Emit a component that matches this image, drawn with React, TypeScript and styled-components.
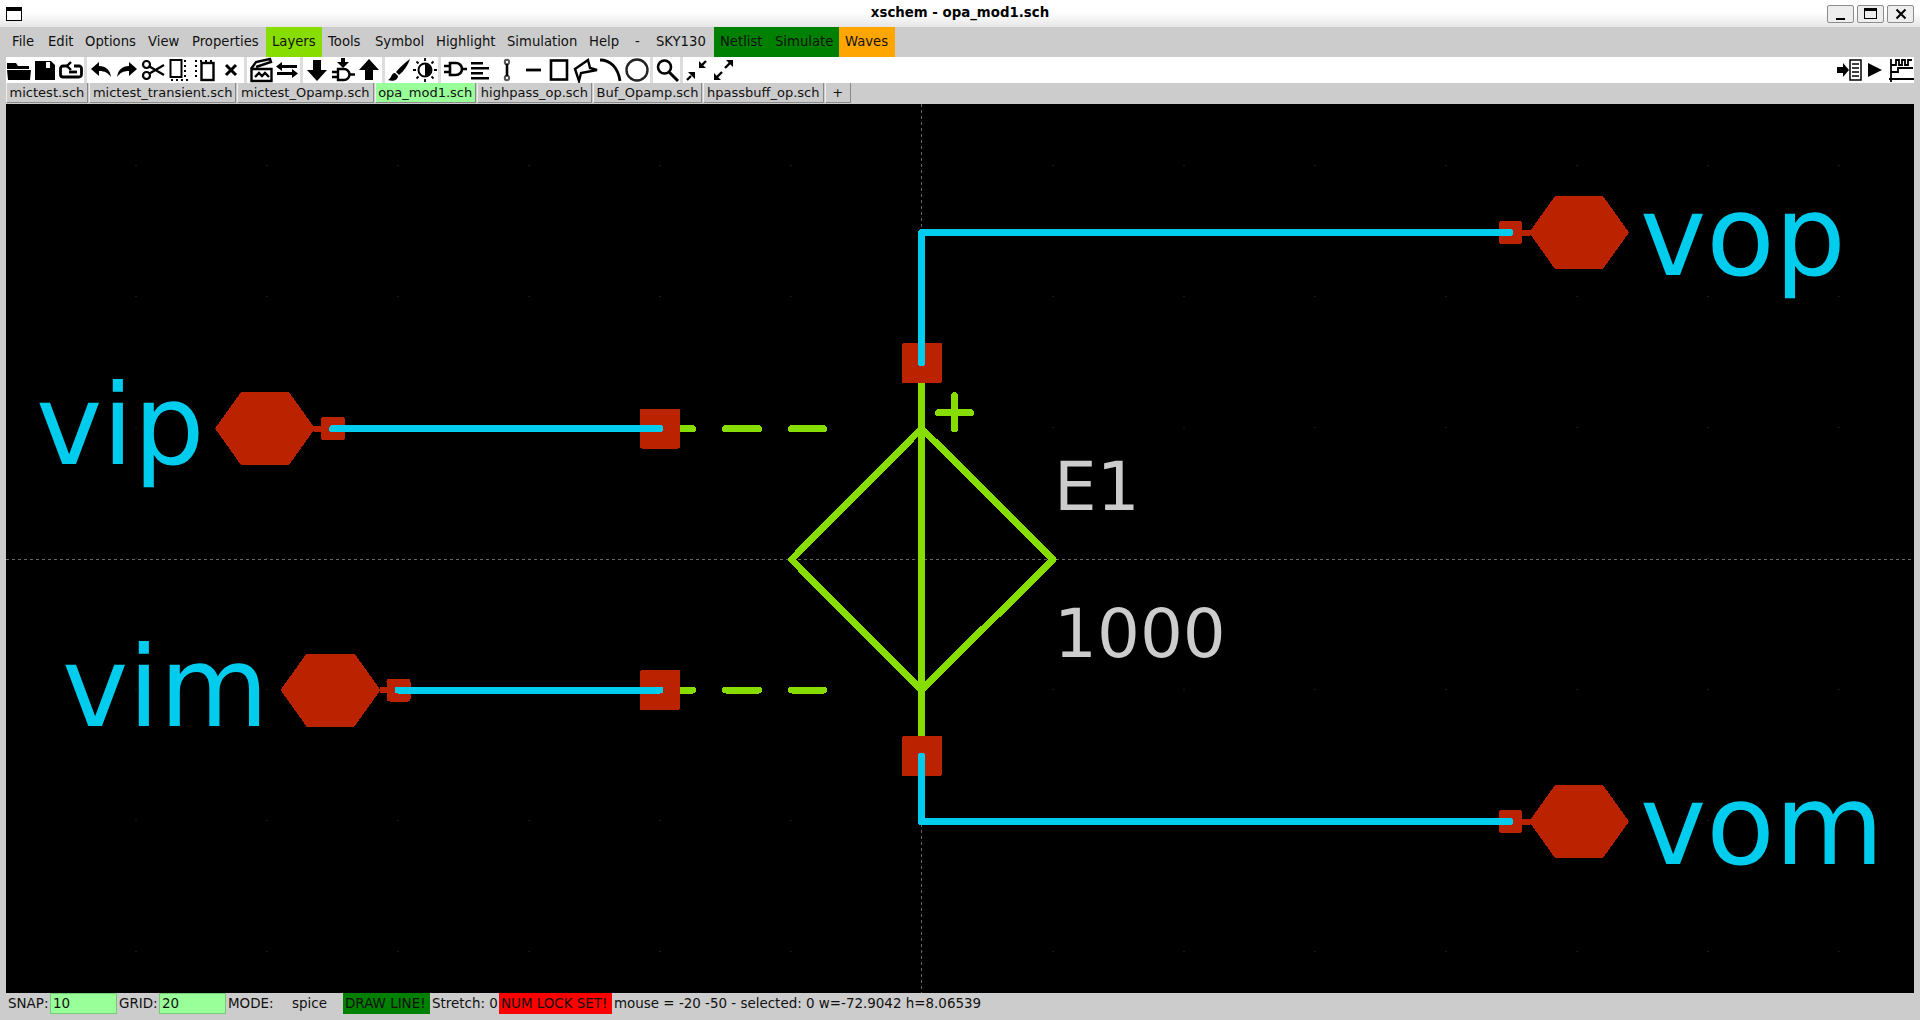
import React from 'react'
import styled, { createGlobalStyle } from 'styled-components'

const GlobalStyle = createGlobalStyle`
  html, body {
    margin: 0;
    padding: 0;
    background: #cccccc;
  }
  #root {
    width: 1920px;
    height: 1020px;
  }
`

const COLORS = {
  wire: '#00ccee',
  pin: '#bb2200',
  symbol: '#88dd00',
  text: '#cccccc',
  entry: '#99ff99'
}

const Window = styled.div`
  display: flex;
  flex-direction: column;
  width: 1920px;
  height: 1020px;
  overflow: hidden;
  background: #cccccc;
  color: #111111;
  font-family: 'DejaVu Sans', sans-serif;
  font-size: 13px;
`

const TitleBar = styled.header`
  position: relative;
  display: flex;
  align-items: center;
  justify-content: space-between;
  height: 27px;
  padding: 0 6px;
  box-sizing: border-box;
  background: linear-gradient(#ffffff 0, #ffffff 45%, #e6e6e6 100%);
`

const Title = styled.div`
  position: absolute;
  left: 0;
  right: 0;
  top: 5px;
  text-align: center;
  font-size: 13.33px;
  line-height: 16px;
  font-weight: 700;
  color: #000000;
`

const WindowIcon = styled.div`
  width: 16px;
  height: 14px;
  box-sizing: border-box;
  border: 1.5px solid #000000;
  border-top-width: 4px;
  background: #ffffff;
`

const WindowButtons = styled.div`
  display: flex;
  gap: 3px;
`

const WindowButton = styled.div`
  display: flex;
  align-items: center;
  justify-content: center;
  width: 27px;
  height: 18px;
  box-sizing: border-box;
  border: 1px solid #8c8c8c;
  border-radius: 2px;
  background: #eeeeee;
`

const MenuBar = styled.nav`
  display: flex;
  align-items: stretch;
  height: 30px;
  padding: 0 6px;
`

const MenuItem = styled.div<{ $width: number; $bg?: string }>`
  display: flex;
  align-items: center;
  box-sizing: border-box;
  width: ${({ $width }) => $width}px;
  padding: 0 0 2px 6px;
  font-size: 13.2px;
  white-space: pre;
  background: ${({ $bg }) => $bg || 'transparent'};
`

const Toolbar = styled.div`
  display: flex;
  height: 26px;
  margin: 0 6px;
  background: #ffffff;
`

const ToolGroup = styled.div<{ $right?: boolean }>`
  display: flex;
  margin-left: ${({ $right }) => ($right ? 'auto' : '0')};
`

const ToolSep = styled.div`
  width: 3px;
  margin-right: 1px;
  background: #dddddd;
`

const ToolButton = styled.div`
  width: 26px;
  height: 26px;
  display: flex;
  align-items: center;
  justify-content: center;
`

const TabBar = styled.div`
  display: flex;
  height: 21px;
  padding: 0 6px;
`

const Tab = styled.div<{ $active?: boolean }>`
  display: flex;
  align-items: center;
  height: 20px;
  padding: 0 3px 0 2.6px;
  margin-right: 1px;
  box-sizing: border-box;
  white-space: pre;
  background: ${({ $active }) => ($active ? COLORS.entry : '#cccccc')};
  border-right: 1px solid #888888;
  border-bottom: 1px solid #888888;
  border-left: 1px solid #eeeeee;
`

const Canvas = styled.main`
  flex: 1;
  margin: 0 6px;
  background: #000000;
`

const Sheet = styled.svg`
  display: block;
  width: 1908px;
  height: 889px;
`

const Wire = styled.path<{ $color: string }>`
  fill: none;
  stroke: ${({ $color }) => $color};
  stroke-width: 7px;
  stroke-linecap: round;
  stroke-linejoin: round;
`

const Guide = styled.path`
  fill: none;
  stroke: #666666;
  stroke-width: 1px;
  stroke-dasharray: 3 3;
  shape-rendering: crispEdges;
`

const PinBox = styled.rect`
  fill: ${COLORS.pin};
`

const PinShape = styled.polygon`
  fill: ${COLORS.pin};
`

const NetLabel = styled.text`
  fill: ${COLORS.wire};
  font-family: 'DejaVu Sans', sans-serif;
  font-size: 112px;
`

const SymbolLabel = styled.text`
  fill: ${COLORS.text};
  font-family: 'DejaVu Sans', sans-serif;
  font-size: 67.5px;
`

const StatusBar = styled.footer`
  display: flex;
  align-items: flex-start;
  height: 27px;
  padding: 0 6px;
  font-size: 13.45px;
`

const StatusCell = styled.div<{ $width: number; $bg?: string }>`
  display: flex;
  align-items: center;
  height: 21px;
  width: ${({ $width }) => $width}px;
  box-sizing: border-box;
  padding-left: 2px;
  white-space: pre;
  background: ${({ $bg }) => $bg || 'transparent'};
`

const StatusEntry = styled(StatusCell)`
  background: ${COLORS.entry};
  border: 1px solid #77cc77;
`

const menus: [string, number, string?][] = [
  ['File', 36],
  ['Edit', 37],
  ['Options', 63],
  ['View', 44],
  ['Properties', 80],
  ['Layers', 56, '#88dd00'],
  ['Tools', 47],
  ['Symbol', 61],
  ['Highlight', 71],
  ['Simulation', 82],
  ['Help', 46],
  ['-', 21],
  ['SKY130', 64],
  ['Netlist', 55, '#008000'],
  ['Simulate', 70, '#008000'],
  ['Waves', 56, '#ffa500']
]

const tabs = [
  'mictest.sch',
  'mictest_transient.sch',
  'mictest_Opamp.sch',
  'opa_mod1.sch',
  'highpass_op.sch',
  'Buf_Opamp.sch',
  'hpassbuff_op.sch',
  ' + '
]

const Icon: React.FC<{ children: React.ReactNode }> = ({ children }) => (
  <svg width="26" height="26" viewBox="0 0 26 26">
    {children}
  </svg>
)

const toolIcons: Record<string, React.ReactNode> = {
  open: <path d="M1 6h9l2 3h11v3H1zM1 13h24l-1 10H2z" />,
  save: (
    <path
      fillRule="evenodd"
      d="M3 4h16l4 4v15H3zM14 5v6h4V5z"
    />
  ),
  reload: (
    <g fill="none" stroke="#000" strokeWidth="2.8">
      <path d="M10 9H5a2.500 2.500 0 0 0-2.500 2.500v6A2.500 2.500 0 0 0 5 20h16a2.500 2.500 0 0 0 2.500-2.500v-6A2.500 2.500 0 0 0 21 9h-5" />
      <path d="M19 15h-8" />
      <path d="M13 5l-4 4 4 4" strokeWidth="2.400" />
    </g>
  ),
  undo: <path d="M3 12l8-7v4c7 0 11 4 12 11-3-4-6-6-12-6v5z" />,
  redo: <path d="M23 12l-8-7v4c-7 0-11 4-12 11 3-4 6-6 12-6v5z" />,
  cut: (
    <g fill="none" stroke="#000" strokeWidth="2.2">
      <circle cx="6.500" cy="7.500" r="3.500" />
      <circle cx="6.500" cy="18.500" r="3.500" />
      <path d="M9.500 9.500L24 18M9.500 16.500L24 8" />
    </g>
  ),
  copy: (
    <g>
      <rect x="4.500" y="3" width="11" height="17" fill="none" stroke="#000" strokeWidth="2" />
      <path d="M18 3h2v2h-2zM18 8h2v2h-2zM18 13h2v2h-2zM18 18h2v2h-2zM5 22h2v2H5zM10 22h2v2h-2zM15 22h2v2h-2zM20 22h2v2h-2z" />
    </g>
  ),
  move: (
    <g>
      <rect x="9.500" y="6" width="12" height="17" fill="none" stroke="#000" strokeWidth="2.400" />
      <path d="M3 3h2v2H3zM8 3h2v2H8zM13 3h2v2h-2zM18 3h2v2h-2zM3 8h2v2H3zM3 13h2v2H3zM3 18h2v2H3z" />
    </g>
  ),
  del: <path d="M8 8l10 10M18 8L8 18" stroke="#000" strokeWidth="3" />,
  schematic: (
    <g fill="none" stroke="#000" strokeWidth="2.400">
      <path d="M3 12L8 5l14-3 1 3-15 5" />
      <path d="M3.500 12h20v12h-20zM7 20l4-4 3 3 3-3 4 4" />
    </g>
  ),
  swap: <path d="M8 5v3h15v3H8v3L2 9.500zM18 12v3H3v3h15v3l6-4.500z" />,
  down: <path d="M9 3h8v10h6L13 24 3 13h6z" />,
  descend: (
    <g>
      <path d="M11 1h4v4h4l-6 6-6-6h4z" />
      <path
        fill="none"
        stroke="#000"
        strokeWidth="2.400"
        d="M8 12h6a5.500 5.500 0 0 1 0 11H8zM2 15h6M2 20h6M20 17.500h5"
      />
    </g>
  ),
  up: <path d="M13 2l10 11h-6v10H9V13H3z" />,
  brush: <path d="M24 2c-4 3-10 8-14 13l3 3c5-4 9-10 11-16zM9 16c-4 0-3 5-7 7 5 2 10 0 10-4z" />,
  sun: (
    <g>
      <circle cx="13" cy="13" r="6.500" fill="none" stroke="#000" strokeWidth="2" />
      <path d="M13 7a6 6 0 0 1 0 12z" />
      <path
        stroke="#000"
        strokeWidth="1.800"
        strokeDasharray="3 2"
        d="M13 1v3M13 22v3M1 13h3M22 13h3M4.500 4.500l2 2M19.500 19.500l2 2M4.500 21.500l2-2M19.500 6.500l2-2"
      />
    </g>
  ),
  gate: (
    <path
      fill="none"
      stroke="#000"
      strokeWidth="2.600"
      d="M8 6h6a6 6 0 0 1 0 12H8zM2 9h6M2 15h6M20 12h5"
    />
  ),
  lines: <path d="M3 5h12v2.500H3zM3 10h18v2.500H3zM3 15h12v2.500H3zM3 20h18v2.500H3z" />,
  pin: (
    <g fill="none" stroke="#000" strokeWidth="2">
      <circle cx="13" cy="5" r="2.200" stroke="#555" />
      <circle cx="13" cy="21" r="2.200" stroke="#555" />
      <path d="M13 7v12" strokeWidth="2.600" />
    </g>
  ),
  line: <path d="M6 13h15" stroke="#000" strokeWidth="2.800" />,
  rect: <rect x="5" y="3.500" width="16" height="19" fill="none" stroke="#000" strokeWidth="2.600" />,
  poly: <path d="M3 12L16 3l2 8 7 2-16 3-2 8z" fill="none" stroke="#000" strokeWidth="2.400" />,
  arc: <path d="M2 3c10 0 18 7 20 21" fill="none" stroke="#000" strokeWidth="2.800" />,
  circle: <circle cx="13" cy="13" r="10.500" fill="none" stroke="#222" strokeWidth="2.400" />,
  zoom: (
    <g fill="none" stroke="#000">
      <circle cx="10.500" cy="10" r="6.500" strokeWidth="2.600" />
      <path d="M15 15l9 9" strokeWidth="3" />
    </g>
  ),
  shrink: (
    <g>
      <path d="M11 15v7l-7-7zM15 11V4l7 7z" />
      <path d="M7 19l-4 4M18 8l4-4" stroke="#000" strokeWidth="2.400" />
    </g>
  ),
  expand: (
    <g>
      <path d="M4 23v-7l7 7zM23 3v7l-7-7z" />
      <path d="M7 20l5-5M20 6l-5 5" stroke="#000" strokeWidth="2.400" />
    </g>
  ),
  netlist: (
    <g>
      <path d="M1 10h6V6l6 7-6 7v-4H1z" />
      <path fill="#fff" stroke="#000" strokeWidth="1.500" d="M14 3h11v20H14z" />
      <path stroke="#000" strokeWidth="1.500" d="M16 7h7M16 11h7M16 15h7M16 19h7" />
    </g>
  ),
  play: <path d="M6 6l14 7-14 7z" />,
  waves: (
    <path
      fill="none"
      stroke="#000"
      strokeWidth="1.800"
      d="M3 2v23M1 22h25M3 15h7v-4h15M3 8h5V3h3v5h3V3h3v5h3V3h4"
    />
  )
}

const toolGroups: string[][] = [
  ['open', 'save', 'reload'],
  ['undo', 'redo', 'cut', 'copy', 'move', 'del'],
  ['schematic', 'swap'],
  ['down', 'descend', 'up'],
  ['brush', 'sun'],
  ['gate', 'lines', 'pin', 'line', 'rect', 'poly', 'arc', 'circle'],
  ['zoom'],
  ['shrink', 'expand']
]

const hexagon = (left: number, y: number) => {
  const p = [
    [left, y],
    [left + 26, y - 36.500],
    [left + 74, y - 36.500],
    [left + 100, y],
    [left + 74, y + 36.500],
    [left + 26, y + 36.500]
  ]
  return p.map(([a, b]) => `${a},${b}`).join(' ')
}

const InputPin: React.FC<{ left: number; y: number }> = ({ left, y }) => (
  <>
    <PinShape points={hexagon(left, y)} />
    <PinBox x={left + 99} y={y - 3} width={8} height={6} />
    <PinBox x={left + 106} y={y - 11.500} width={24} height={23} rx={3} />
    <Wire $color={COLORS.symbol} d={`M680 ${y}H692.500M725.500 ${y}H758.500M791.500 ${y}H823.500`} />
    <PinBox x={640} y={y - 20} width={40} height={40} rx={2} />
    <Wire $color={COLORS.wire} d={`M${left + 117.500} ${y}H660`} />
  </>
)

const OutputPin: React.FC<{ y: number }> = ({ y }) => (
  <>
    <PinShape points={hexagon(1529, y)} />
    <PinBox x={1521} y={y - 3} width={9} height={6} />
    <PinBox x={1499} y={y - 11.500} width={23} height={23} rx={3} />
  </>
)

const Schematic: React.FC = () => (
  <Sheet viewBox="6 104 1908 889" shapeRendering="crispEdges">
    <defs>
      <pattern id="grid" x="136.500" y="35" width="131" height="131" patternUnits="userSpaceOnUse">
        <rect x="130" y="130" width="2" height="2" fill="#333333" />
      </pattern>
    </defs>
    <rect x="6" y="104" width="1908" height="889" fill="url(#grid)" />
    <Guide d="M6 559.500H1914M921.500 104V993" />

    <Wire $color={COLORS.symbol} d="M921.500 383V736" />
    <Wire $color={COLORS.symbol} d="M921.500 428.500L791.500 559.500L921.500 690L1053 559.500Z" />
    <Wire $color={COLORS.symbol} d="M938.500 412.500H970.500M954.500 395.500V428.500" />

    <PinBox x={902} y={343} width={40} height={40} rx={2} />
    <PinBox x={902} y={736} width={40} height={40} rx={2} />

    <InputPin left={215} y={428.500} />
    <InputPin left={280.500} y={690} />
    <OutputPin y={232.500} />
    <OutputPin y={821.500} />

    <Wire $color={COLORS.wire} d="M921.500 363V232.500H1510" />
    <Wire $color={COLORS.wire} d="M921.500 756V821.500H1510" />

    <g textRendering="geometricPrecision">
      <NetLabel x="1640" y="275">vop</NetLabel>
      <NetLabel x="1640" y="864">vom</NetLabel>
      <NetLabel x="36" y="464">vip</NetLabel>
      <NetLabel x="62" y="726">vim</NetLabel>
      <SymbolLabel x="1054" y="510">E1</SymbolLabel>
      <SymbolLabel x="1054" y="657">1000</SymbolLabel>
    </g>
  </Sheet>
)

export default function App() {
  return (
    <Window>
      <GlobalStyle />
      <TitleBar>
        <Title>xschem - opa_mod1.sch</Title>
        <WindowIcon />
        <WindowButtons>
          <WindowButton>
            <svg width="14" height="14" viewBox="0 0 14 14">
              <path d="M2 11h9v2H2z" />
            </svg>
          </WindowButton>
          <WindowButton>
            <svg width="16" height="14" viewBox="0 0 16 14">
              <path fillRule="evenodd" d="M1 1h13v11H1zM2 4v7h11V4z" />
            </svg>
          </WindowButton>
          <WindowButton>
            <svg width="14" height="14" viewBox="0 0 14 14">
              <path d="M2.500 2.500l9 9M11.500 2.500l-9 9" stroke="#000" strokeWidth="2" />
            </svg>
          </WindowButton>
        </WindowButtons>
      </TitleBar>

      <MenuBar>
        {menus.map(([label, width, bg]) => (
          <MenuItem key={label} $width={width} $bg={bg}>
            {label}
          </MenuItem>
        ))}
      </MenuBar>

      <Toolbar>
        {toolGroups.map((group, i) => (
          <React.Fragment key={i}>
            <ToolGroup>
              {group.map((name) => (
                <ToolButton key={name}>
                  <Icon>{toolIcons[name]}</Icon>
                </ToolButton>
              ))}
            </ToolGroup>
            {i < toolGroups.length - 1 && <ToolSep />}
          </React.Fragment>
        ))}
        <ToolGroup $right>
          {['netlist', 'play', 'waves'].map((name) => (
            <ToolButton key={name}>
              <Icon>{toolIcons[name]}</Icon>
            </ToolButton>
          ))}
        </ToolGroup>
      </Toolbar>

      <TabBar>
        {tabs.map((t) => (
          <Tab key={t} $active={t === 'opa_mod1.sch'}>
            {t}
          </Tab>
        ))}
      </TabBar>

      <Canvas>
        <Schematic />
      </Canvas>

      <StatusBar>
        <StatusCell $width={44}>SNAP:</StatusCell>
        <StatusEntry $width={67}>10</StatusEntry>
        <StatusCell $width={42}>GRID:</StatusCell>
        <StatusEntry $width={67}>20</StatusEntry>
        <StatusCell $width={64}>MODE:</StatusCell>
        <StatusCell $width={53}>spice</StatusCell>
        <StatusCell $width={87} $bg="#008000">DRAW LINE!</StatusCell>
        <StatusCell $width={69}>Stretch: 0</StatusCell>
        <StatusCell $width={113} $bg="#ff0000">NUM LOCK SET!</StatusCell>
        <StatusCell $width={400}>mouse = -20 -50 - selected: 0 w=-72.9042 h=8.06539</StatusCell>
      </StatusBar>
    </Window>
  )
}
